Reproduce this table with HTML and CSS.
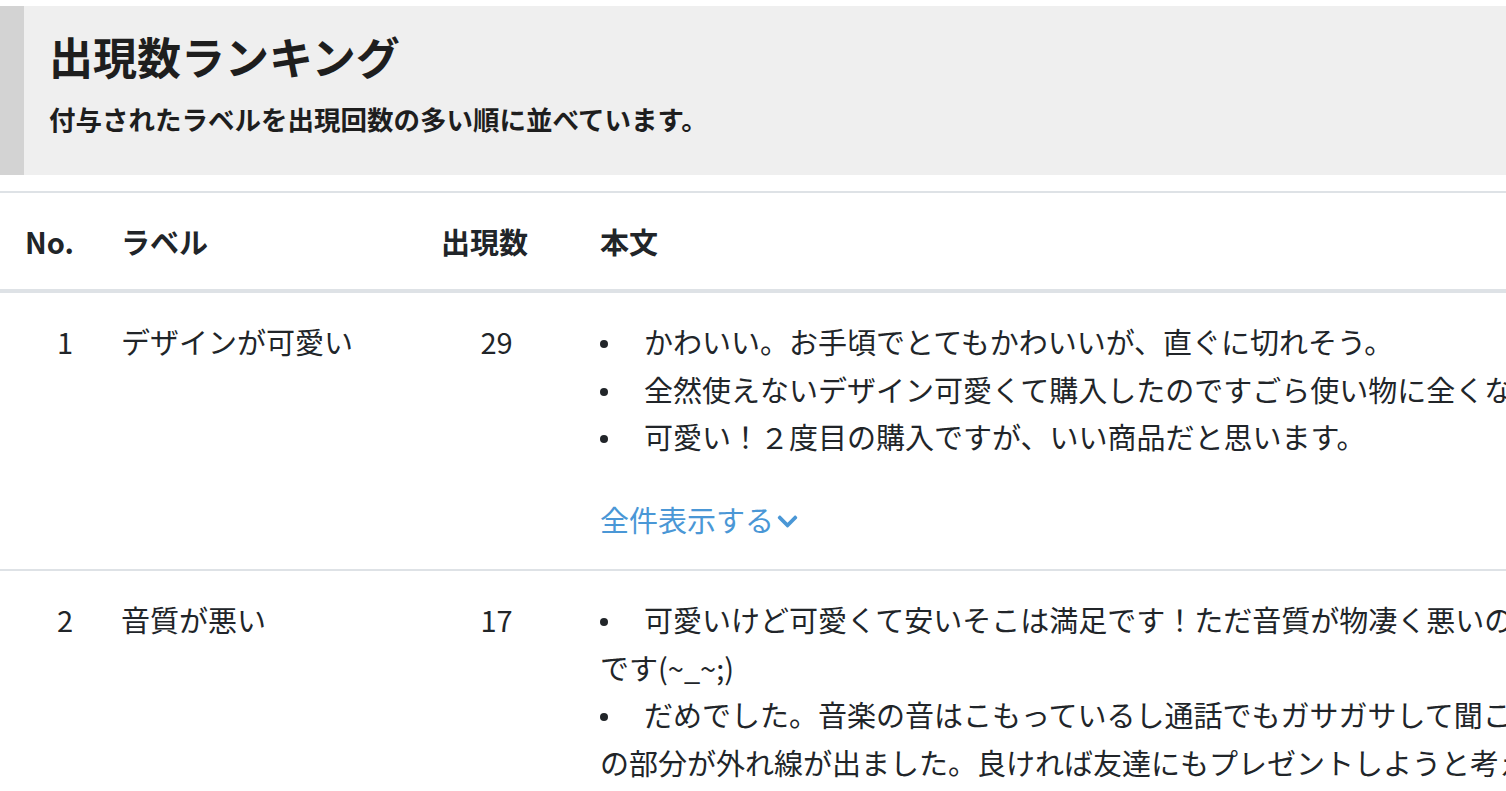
FILE: index.html
```html
<!DOCTYPE html>
<html lang="ja">
<head>
<meta charset="utf-8">
<title>出現数ランキング</title>
<link rel="stylesheet" href="styles.css">
</head>
<body>
<div class="page">
  <section class="hero">
    <h1 class="hero-title">出現数ランキング</h1>
    <p class="hero-sub">付与されたラベルを出現回数の多い順に並べています。</p>
  </section>

  <table class="ranking">
    <colgroup>
      <col class="c-no">
      <col class="c-label">
      <col class="c-count">
      <col class="c-body">
    </colgroup>
    <thead>
      <tr>
        <th class="th">No.</th>
        <th class="th">ラベル</th>
        <th class="th">出現数</th>
        <th class="th">本文</th>
      </tr>
    </thead>
    <tbody>
      <tr class="row">
        <td class="td td-no">1</td>
        <td class="td">デザインが可愛い</td>
        <td class="td td-count">29</td>
        <td class="td">
          <ul class="texts">
            <li class="text">かわいい。お手頃でとてもかわいいが、直ぐに切れそう。</li>
            <li class="text">全然使えないデザイン可愛くて購入したのですごら使い物に全くならない</li>
            <li class="text">可愛い！２度目の購入ですが、いい商品だと思います。</li>
          </ul>
          <a class="more" href="#">全件表示する<svg class="chev" viewBox="0 0 448 512" aria-hidden="true"><path d="M207.029 381.476L12.686 187.132c-9.373-9.373-9.373-24.569 0-33.941l22.667-22.667c9.357-9.357 24.522-9.375 33.901-.04L224 284.505l154.745-154.021c9.379-9.335 24.544-9.317 33.901.04l22.667 22.667c9.373 9.373 9.373 24.569 0 33.941L240.971 381.476c-9.373 9.372-24.569 9.372-33.942 0z"/></svg></a>
        </td>
      </tr>
      <tr class="row">
        <td class="td td-no">2</td>
        <td class="td">音質が悪い</td>
        <td class="td td-count">17</td>
        <td class="td">
          <ul class="texts">
            <li class="text">可愛いけど可愛くて安いそこは満足です！ただ音質が物凄く悪いのが残念です(~_~;)</li>
            <li class="text">だめでした。音楽の音はこもっているし通話でもガサガサして聞こえず耳の部分が外れ線が出ました。良ければ友達にもプレゼントしようと考えていましたが、やめました。</li>
            <li class="text">値段相応だと思います。</li>
          </ul>
          <a class="more" href="#">全件表示する<svg class="chev" viewBox="0 0 448 512" aria-hidden="true"><path d="M207.029 381.476L12.686 187.132c-9.373-9.373-9.373-24.569 0-33.941l22.667-22.667c9.357-9.357 24.522-9.375 33.901-.04L224 284.505l154.745-154.021c9.379-9.335 24.544-9.317 33.901.04l22.667 22.667c9.373 9.373 9.373 24.569 0 33.941L240.971 381.476c-9.373 9.372-24.569 9.372-33.942 0z"/></svg></a>
        </td>
      </tr>
    </tbody>
  </table>
</div>
</body>
</html>
```

FILE: styles.css
```css
html, body {
  margin: 0;
  padding: 0;
  overflow: hidden;
  background: #ffffff;
}

body {
  font-family: "Noto Sans CJK JP", "Noto Sans", sans-serif;
  color: #212529;
  font-size: 29px;
}

.page {
  padding-top: 6px;
}

.hero {
  background: #efefef;
  border-left: 24px solid #d3d3d3;
  padding: 24px 26px 37px 25px;
  margin-bottom: 16px;
}

.hero-title {
  margin: 0 0 16px 0;
  font-size: 44px;
  line-height: 53px;
  font-weight: 700;
  color: #1e1e1e;
}

.hero-sub {
  margin: 0;
  font-size: 26.5px;
  line-height: 39px;
  font-weight: 700;
  color: #1e1e1e;
}

.ranking {
  table-layout: fixed;
  border-collapse: collapse;
  width: 1639px;
  border-top: 2px solid #dee2e6;
}

.c-no { width: 97px; }
.c-label { width: 320px; }
.c-count { width: 159px; }
.c-body { width: 1063px; }

.th {
  text-align: left;
  font-weight: 700;
  font-size: 29px;
  line-height: 48px;
  padding: 24px 24px;
  border-bottom: 4px solid #dee2e6;
  color: #212529;
}

.th:first-child {
  padding-left: 25px;
}

.row {
  border-bottom: 2px solid #dee2e6;
}

.td {
  vertical-align: top;
  padding: 25px 24px 26px 24px;
  line-height: 47.5px;
  font-size: 29px;
}

.td-no {
  text-align: right;
}

.td-count {
  text-align: center;
}

.texts {
  list-style: none;
  margin: 0 0 35px 0;
  padding: 0;
}

.text::before {
  content: "";
  display: inline-block;
  width: 8px;
  height: 8px;
  border-radius: 50%;
  background: #212529;
  vertical-align: middle;
  margin: 0 36px 4px 0;
}

.more {
  color: #4a97d6;
  text-decoration: none;
  display: inline-flex;
  align-items: center;
}

.chev {
  width: 21px;
  height: 23px;
  fill: #4a97d6;
  margin-left: 3px;
  margin-top: 4px;
}
```
